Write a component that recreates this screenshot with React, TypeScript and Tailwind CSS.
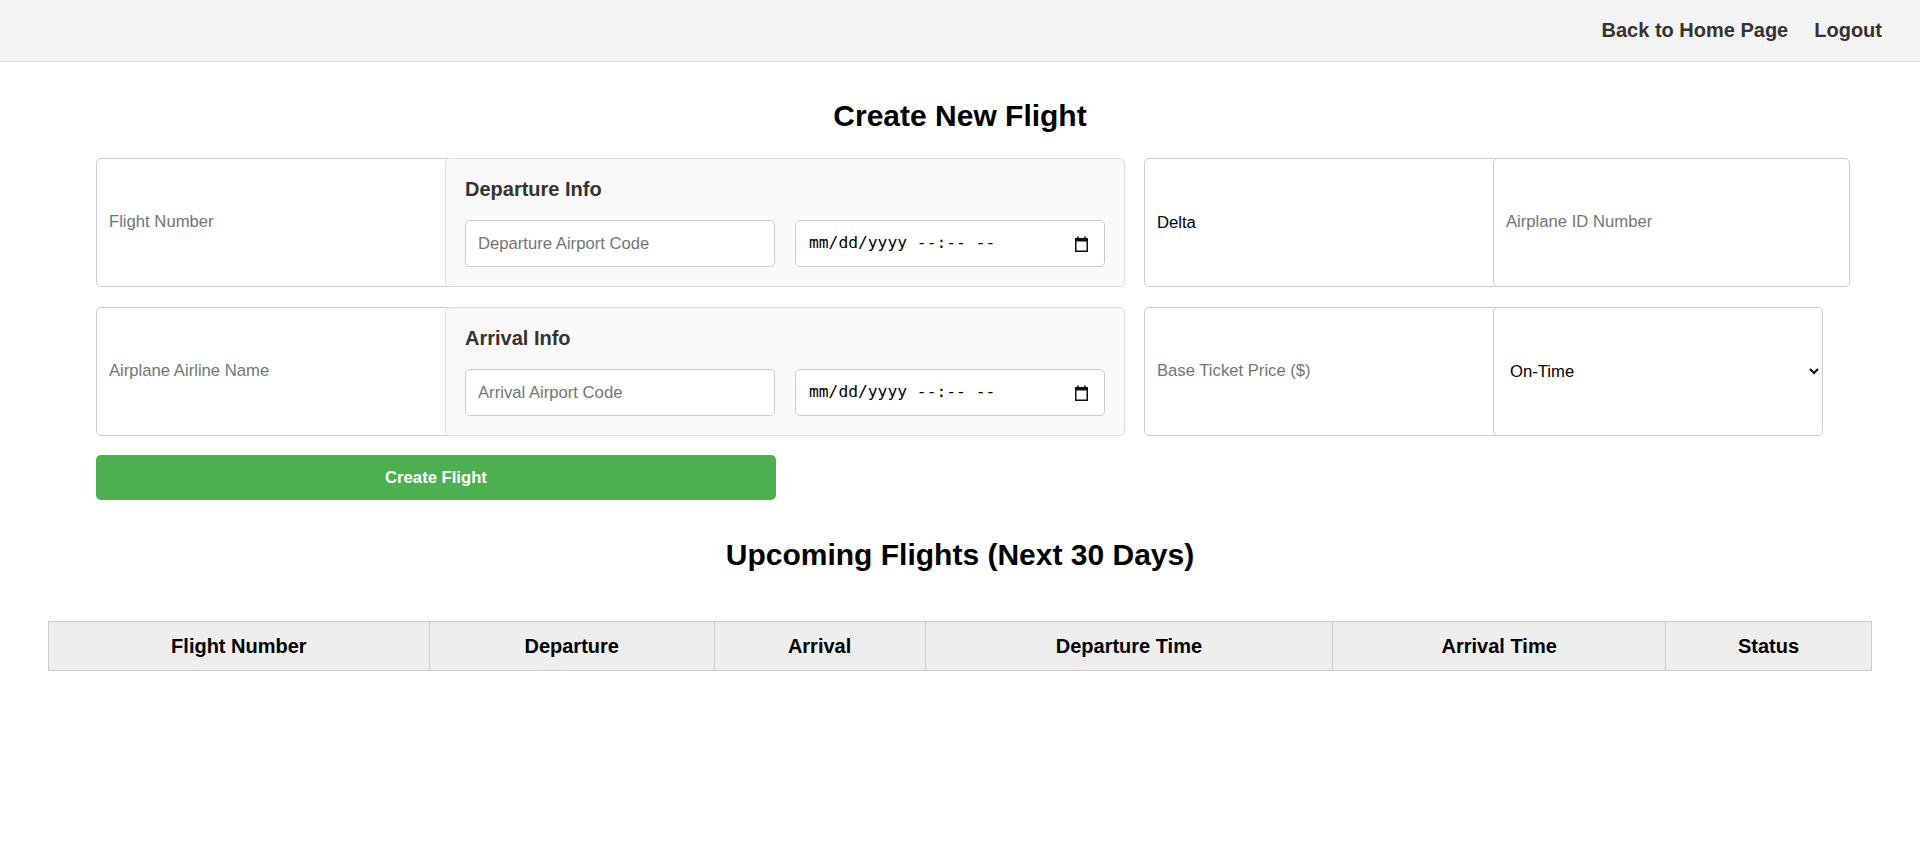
import { useState } from "react";

const inputCls =
  "border border-[#ccc] rounded-[5px] bg-white px-3 text-[16.67px] text-black placeholder:text-[#757575] outline-none";

function CalendarIcon() {
  return (
    <svg width="13" height="16" viewBox="0 0 13 16" className="shrink-0">
      <rect x="2.2" y="0.5" width="1.6" height="3" fill="#111" />
      <rect x="9.2" y="0.5" width="1.6" height="3" fill="#111" />
      <rect x="0.75" y="2.75" width="11.5" height="12.5" fill="none" stroke="#111" strokeWidth="1.5" />
      <rect x="0" y="2" width="13" height="3.5" fill="#111" />
    </svg>
  );
}

function DateTimeField() {
  return (
    <label className="flex h-[47px] w-full cursor-text items-center justify-between rounded-[5px] border border-[#ccc] bg-white pl-[13px] pr-[16px]">
      <span className="font-['DejaVu_Sans_Mono','Liberation_Mono',monospace] text-[16.3px] whitespace-pre text-black">
        mm/dd/yyyy --:-- --
      </span>
      <CalendarIcon />
    </label>
  );
}

function InfoPanel({ title, placeholder }: { title: string; placeholder: string }) {
  return (
    <div className="relative z-10 -ml-[6px] w-[680px] shrink-0 rounded-[5px] border border-[#ddd] bg-[#f9f9f9] px-[19px] pt-[19px] pb-[19px]">
      <h3 className="mb-5 text-[20px] leading-[22px] font-bold text-[#333]">{title}</h3>
      <div className="grid grid-cols-2 gap-5">
        <input type="text" placeholder={placeholder} className={`${inputCls} h-[47px] w-full`} />
        <DateTimeField />
      </div>
    </div>
  );
}

export default function App() {
  const [airline, setAirline] = useState("Delta");
  const [status, setStatus] = useState("On-Time");

  return (
    <div className="min-h-screen bg-white font-['Liberation_Sans',Arial,sans-serif] text-black">
      <header className="flex h-[62px] items-center justify-end gap-[26px] border-b border-[#ddd] bg-[#f3f3f3] pr-[38px] pb-px">
        <a href="#" className="text-[20px] font-bold text-[#333]">Back to Home Page</a>
        <a href="#" className="text-[20px] font-bold text-[#333]">Logout</a>
      </header>

      <h2 className="mt-[36px] text-center text-[30px] leading-[36px] font-bold">Create New Flight</h2>

      <form className="mt-[24px] pl-[96px]" onSubmit={(e) => e.preventDefault()}>
        <div className="flex gap-[19px]">
          <div className="flex">
            <input type="text" placeholder="Flight Number" className={`${inputCls} w-[355px]`} />
            <InfoPanel title="Departure Info" placeholder="Departure Airport Code" />
          </div>
          <div className="flex">
            <input
              type="text"
              value={airline}
              onChange={(e) => setAirline(e.target.value)}
              className={`${inputCls} w-[355px]`}
            />
            <input
              type="text"
              placeholder="Airplane ID Number"
              className={`${inputCls} relative -ml-[6px] w-[357px]`}
            />
          </div>
        </div>

        <div className="mt-5 flex gap-[19px]">
          <div className="flex">
            <input type="text" placeholder="Airplane Airline Name" className={`${inputCls} w-[355px]`} />
            <InfoPanel title="Arrival Info" placeholder="Arrival Airport Code" />
          </div>
          <div className="flex">
            <input type="text" placeholder="Base Ticket Price ($)" className={`${inputCls} w-[355px]`} />
            <select
              value={status}
              onChange={(e) => setStatus(e.target.value)}
              className={`${inputCls} relative -ml-[6px] w-[330px]`}
            >
              <option>On-Time</option>
              <option>Delayed</option>
              <option>Cancelled</option>
            </select>
          </div>
        </div>

        <button
          type="submit"
          className="mt-[19px] h-[45px] w-[680px] rounded-[5px] bg-[#4caf50] text-[16.67px] font-bold text-white"
        >
          Create Flight
        </button>
      </form>

      <h2 className="mt-[37px] text-center text-[30px] leading-[36px] font-bold">Upcoming Flights (Next 30 Days)</h2>

      <div className="mt-[48px] px-[48px]">
        <table className="w-full border-collapse border border-[#ccc]">
          <thead>
            <tr className="h-[49px] bg-[#eee] text-[20px] font-bold">
              <th className="w-[381px] border border-[#ccc]">Flight Number</th>
              <th className="w-[285px] border border-[#ccc]">Departure</th>
              <th className="w-[211px] border border-[#ccc]">Arrival</th>
              <th className="w-[408px] border border-[#ccc]">Departure Time</th>
              <th className="w-[333px] border border-[#ccc]">Arrival Time</th>
              <th className="w-[206px] border border-[#ccc]">Status</th>
            </tr>
          </thead>
          <tbody />
        </table>
      </div>
    </div>
  );
}
